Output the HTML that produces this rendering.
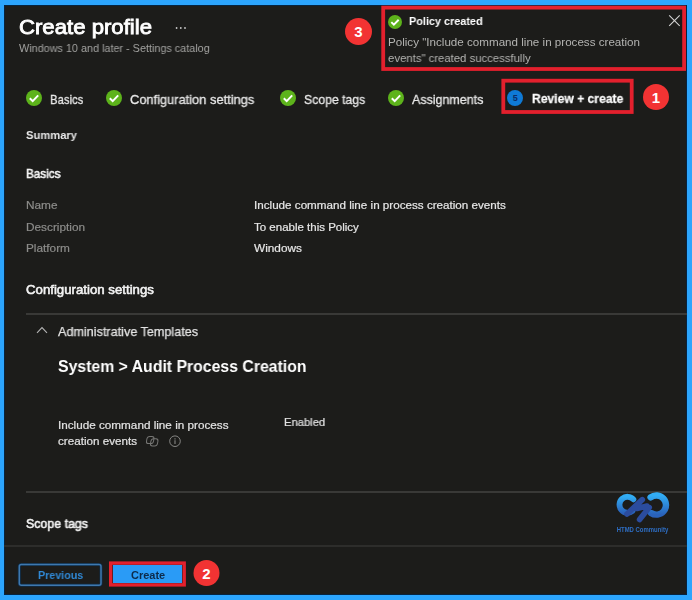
<!DOCTYPE html>
<html><head><meta charset="utf-8">
<style>
*{box-sizing:border-box;margin:0;padding:0}
html,body{width:692px;height:600px;overflow:hidden;background:#2ca5fd}
body{font-family:"Liberation Sans","DejaVu Sans",sans-serif;color:#fff;position:relative}
#panel{position:absolute;left:4px;top:5px;width:683px;height:590px;background:#1c1c1a;box-shadow:inset 0 0 0 1px #06233f}
.abs{position:absolute;white-space:nowrap}
.t{position:absolute;white-space:nowrap;line-height:1;transform-origin:0 50%;will-change:transform}
.hl{position:absolute;height:2px;background:#393937}
.red{position:absolute;border:4px solid #dc222d}
.num{position:absolute;width:27px;height:27px;border-radius:50%;background:#f23333;color:#fff;font-size:15px;font-weight:bold;text-align:center;line-height:28.5px}
.lab{font-size:11.5px;color:#8c8c8a;-webkit-text-stroke:.2px #8c8c8a}
.val{font-size:11.5px;color:#e6e6e6;-webkit-text-stroke:.2px #e6e6e6}
.h{font-size:12.5px;color:#f4f4f4;-webkit-text-stroke:.55px #f4f4f4}
.tab{font-size:13px;color:#e8e8e8;-webkit-text-stroke:.3px #e8e8e8}
</style></head><body>
<div id="panel"></div>

<div class="t" style="left:18.8px;top:17.3px;font-size:20.8px;-webkit-text-stroke:.85px #fff;transform:scaleX(1.065)">Create profile</div>
<svg class="abs" style="left:174.2px;top:24.5px" width="14" height="6" viewBox="0 0 14 6"><circle cx="2.6" cy="3" r=".9" fill="#c8c8c8"/><circle cx="6.8" cy="3" r=".9" fill="#c8c8c8"/><circle cx="11" cy="3" r=".9" fill="#c8c8c8"/></svg>
<div class="t" style="left:19px;top:43px;font-size:11px;color:#a3a3a1;transform:scaleX(.984)">Windows 10 and later - Settings catalog</div>

<!-- tabs -->
<svg class="abs" style="left:26px;top:90px" width="16" height="16" viewBox="0 0 16 16"><circle cx="8" cy="8" r="8" fill="#5db31b"/><path d="M3.8 8.2l2.9 2.9L12.2 5.4" fill="none" stroke="#fff" stroke-width="2"/></svg>
<div class="t tab" style="left:50.4px;top:92.7px;transform:scaleX(.87)">Basics</div>
<svg class="abs" style="left:106px;top:90px" width="16" height="16" viewBox="0 0 16 16"><circle cx="8" cy="8" r="8" fill="#5db31b"/><path d="M3.8 8.2l2.9 2.9L12.2 5.4" fill="none" stroke="#fff" stroke-width="2"/></svg>
<div class="t tab" style="left:130px;top:92.7px;transform:scaleX(.988)">Configuration settings</div>
<svg class="abs" style="left:280px;top:90px" width="16" height="16" viewBox="0 0 16 16"><circle cx="8" cy="8" r="8" fill="#5db31b"/><path d="M3.8 8.2l2.9 2.9L12.2 5.4" fill="none" stroke="#fff" stroke-width="2"/></svg>
<div class="t tab" style="left:304px;top:92.7px;transform:scaleX(.941)">Scope tags</div>
<svg class="abs" style="left:388px;top:90px" width="16" height="16" viewBox="0 0 16 16"><circle cx="8" cy="8" r="8" fill="#5db31b"/><path d="M3.8 8.2l2.9 2.9L12.2 5.4" fill="none" stroke="#fff" stroke-width="2"/></svg>
<div class="t tab" style="left:412px;top:92.7px;transform:scaleX(.959)">Assignments</div>


<div class="abs" style="left:507.2px;top:90px;width:16px;height:16px;border-radius:50%;background:#0f7ad6;color:#0b2c66;font-size:9px;font-weight:bold;text-align:center;line-height:16px">5</div>
<div class="t tab" style="left:532px;top:92.2px;font-weight:bold;color:#fff;transform:scaleX(.932)">Review + create</div>
<div class="num" style="left:643px;top:84px;width:26px;height:26px;line-height:27.5px">1</div>

<!-- toast -->
<div class="num" style="left:345px;top:18px">3</div>

<svg class="abs" style="left:388.2px;top:14.5px" width="14" height="14" viewBox="0 0 16 16"><circle cx="8" cy="8" r="8" fill="#5db31b"/><path d="M3.8 8.2l2.9 2.9L12.2 5.4" fill="none" stroke="#fff" stroke-width="2.2"/></svg>
<div class="t" style="left:409px;top:16px;font-size:11.5px;font-weight:bold;color:#fff;transform:scaleX(.944)">Policy created</div>

<div class="t" style="left:388px;top:36.9px;font-size:11.5px;color:#b4b4b2;transform:scaleX(1.01)">Policy "Include command line in process creation</div>
<div class="t" style="left:388px;top:52.9px;font-size:11.5px;color:#b4b4b2;transform:scaleX(.986)">events" created successfully</div>

<!-- body -->
<div class="t" style="left:26px;top:130px;font-size:11.5px;font-weight:bold;color:#e8e8e8;transform:scaleX(.971)">Summary</div>
<div class="t h" style="left:26px;top:168px;transform:scaleX(.936)">Basics</div>

<div class="t lab" style="left:26px;top:200px;transform:scaleX(1.027)">Name</div>
<div class="t lab" style="left:26px;top:222px;transform:scaleX(1.026)">Description</div>
<div class="t lab" style="left:26px;top:243px;transform:scaleX(1.026)">Platform</div>
<div class="t val" style="left:254px;top:200px;transform:scaleX(1.013)">Include command line in process creation events</div>
<div class="t val" style="left:254px;top:222px;">To enable this Policy</div>
<div class="t val" style="left:254px;top:243px;transform:scaleX(1.026)">Windows</div>

<div class="t h" style="left:26px;top:284px;transform:scaleX(1.058)">Configuration settings</div>
<div class="hl" style="left:26px;top:313px;width:661px"></div>
<svg class="abs" style="left:36px;top:326.4px" width="12" height="8" viewBox="0 0 12 8"><path d="M1 6.8l5-5.3L11 6.8" stroke="#b4b4b4" stroke-width="1.1" fill="none"/></svg>
<div class="t" style="left:58px;top:325px;font-size:13px;color:#e4e4e4;-webkit-text-stroke:.25px #e4e4e4;transform:scaleX(.971)">Administrative Templates</div>
<div class="t" style="left:58px;top:358.5px;font-size:16px;font-weight:bold;color:#fff;transform:scaleX(.988)">System &gt; Audit Process Creation</div>

<div class="t val" style="left:58px;top:419.7px;color:#e0e0e0;transform:scaleX(1.018)">Include command line in process</div>
<div class="t val" style="left:58px;top:435.5px;color:#e0e0e0;transform:scaleX(1.013)">creation events</div>
<svg class="abs" style="left:0;top:0" width="692" height="600" viewBox="0 0 692 600"><g fill="none" stroke="#767674" stroke-width="1"><rect x="146.8" y="436.4" width="7" height="7.2" rx="2.4" transform="skewX(-10) translate(77.5 0)"/><rect x="150.3" y="438.8" width="7" height="7.2" rx="2.4" transform="skewX(-10) translate(78.4 0)"/></g>
<circle cx="175" cy="441.2" r="5.3" stroke="#868684" fill="none"/><path d="M175 440.3v3.7M175 438.3v1.1" stroke="#868684" stroke-width="1.1"/></svg>
<div class="t val" style="left:284px;top:417px;color:#e0e0e0;transform:scaleX(.976)">Enabled</div>

<div class="hl" style="left:26px;top:491px;width:661px"></div>
<div class="t h" style="left:26px;top:518px;transform:scaleX(.99)">Scope tags</div>
<div class="hl" style="left:4px;top:545px;width:683px;background:#2d2d2b"></div>

<!-- buttons -->

<div class="t" style="left:37.5px;top:569.5px;font-size:11px;font-weight:bold;color:#3088d4;transform:scaleX(.974)">Previous</div>

<div class="abs" style="left:113px;top:565px;width:69px;height:18px;background:#2a9bf6;"></div>
<div class="t" style="left:131.3px;top:569.9px;font-size:11px;font-weight:bold;color:#0d2b4a">Create</div>
<div class="num" style="left:193px;top:560px;width:26px;height:26px;line-height:27.5px;transform:translate(.5px,0)">2</div>

<svg class="abs" style="left:0;top:0" width="692" height="600" viewBox="0 0 692 600"><g fill="none" stroke="#e3202d">
<rect x="383.2" y="7.6" width="300.9" height="61.4" stroke-width="3.8"/>
<rect x="503.3" y="80.7" width="128.4" height="31.3" stroke-width="3.8"/>
<path d="M669.2 15.3l10.5 10.5M679.7 15.3l-10.5 10.5" stroke="#d2d2d2" stroke-width="1.1"/>
<rect x="19.3" y="564.6" width="81.7" height="20.6" rx="2" stroke="#0e2c49" stroke-width="3"/>
<rect x="19.3" y="564.6" width="81.7" height="20.6" rx="2" stroke="#3f78ad" stroke-width="1.5"/>
<rect x="110.7" y="563.1" width="73.5" height="21.8" stroke-width="3.4"/>
</g></svg>
<!-- logo -->
<svg class="abs" style="left:0;top:0" width="692" height="600" viewBox="0 0 692 600">
<defs><linearGradient id="g" x1="0" y1="0" x2="0" y2="1"><stop offset="0" stop-color="#31acf4"/><stop offset="1" stop-color="#2a62ba"/></linearGradient></defs>
<path d="M633.4 499.4A8 8 0 1 0 632.5 511" fill="none" stroke="url(#g)" stroke-width="5.8" stroke-linecap="round"/>
<path d="M650.6 497.4A9.6 9.6 0 1 1 651 513" fill="none" stroke="url(#g)" stroke-width="6.4" stroke-linecap="round"/>
<path d="M627 514L642.3 499.6M639.6 519.6L649.2 507.4M637 508.5L647 506" fill="none" stroke="#2b4c9e" stroke-width="5.6" stroke-linecap="round"/>
<text x="642.5" y="532.2" font-size="6.4" font-weight="bold" fill="#2e6ec4" text-anchor="middle" textLength="51.5" lengthAdjust="spacingAndGlyphs" font-family="Liberation Sans, sans-serif">HTMD Community</text>
</svg>
</body></html>
